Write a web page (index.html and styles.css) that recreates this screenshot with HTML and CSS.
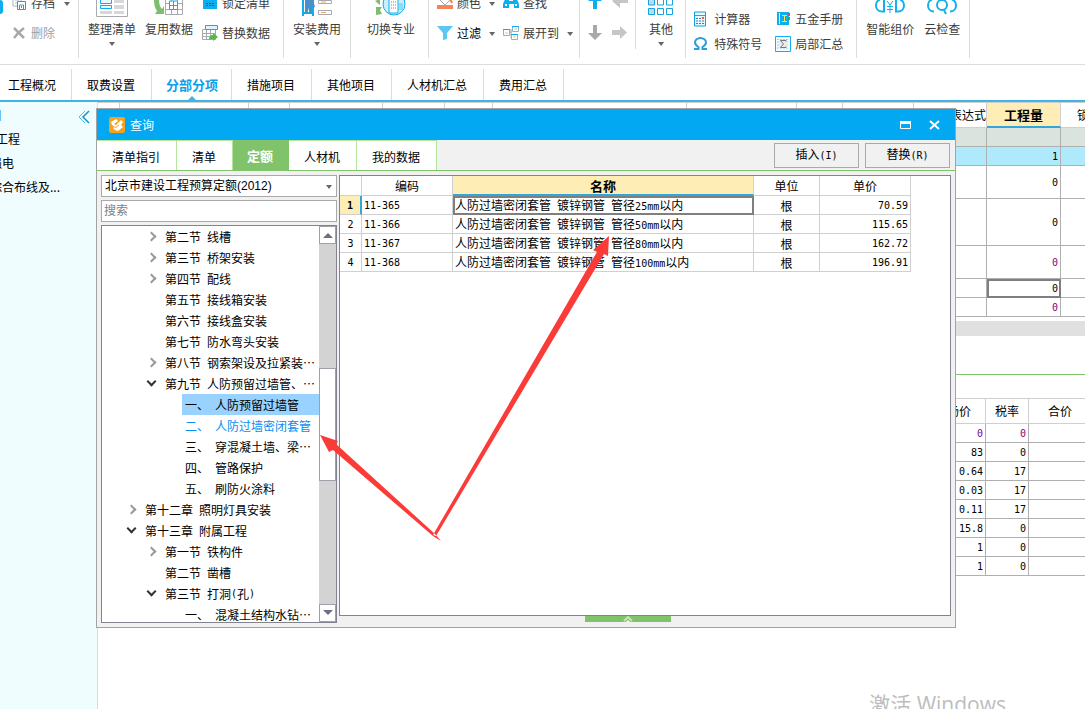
FILE: index.html
```html
<!DOCTYPE html>
<html lang="zh-CN">
<head>
<meta charset="utf-8">
<title>查询</title>
<link rel="stylesheet" href="styles.css">
</head>
<body>
<header class="ribbon">
  <div class="group g-file">
    <span class="dot"></span>
    <div class="stack">
      <button class="small"><svg width="14" height="16" viewBox="0 0 14 16"><path d="M1 2h8v9H1zM3 5h4M3 8h2" fill="#fff" stroke="#a9b4bb"/><path d="M5.500 6.500h8v8h-8zM7.500 14v-4h4v4M9.500 11v2" fill="#fff" stroke="#14a3e0"/></svg>存档</button>
      <button class="small off"><svg width="14" height="14" viewBox="0 0 14 14"><path d="M2 2l10 10M12 2C8 5 5 8 2 12" fill="none" stroke="#a8a8a8" stroke-width="2.500"/></svg>删除</button>
    </div>
    <div class="stack"><i class="caret row"></i><span class="row"></span></div>
  </div>
  <div class="group g-list">
    <button class="big"><svg width="32" height="32" viewBox="0 0 32 32"><path d="M.5 1h31v28.500H.5z" fill="#fff" stroke="#a9a9b0"/><path d="M4.500 12.500h11v4h-11zM4.500 18.500h11v3h-11z" fill="#e8f8fe" stroke="#0caeee"/><path d="M18 12h10v4H18zM18 18h10v4H18zM4 24h12v3H4zM18 24h10v3H18z" fill="#d8d6dc"/></svg>整理清单<i class="caret"></i></button>
    <button class="big"><svg width="32" height="32" viewBox="0 0 32 32"><path d="M12.500 8h17v19.500h-17zM12.500 16.500h17M12.500 22.500h17M18.500 8v19M24.500 8v19" fill="#fff" stroke="#a9a9b0"/><path d="M16.500 14h8v8.500h-8zM20.500 14v8M16.500 18.500h8" fill="#fff" stroke="#0caeee"/><path d="M1 13l5-1c0 5 1 8 3 10l2-3v8H2l2-3c-2-3-3-6-3-11z" fill="#7dbd6c"/></svg>复用数据<i class="caret hide"></i></button>
    <div class="stack">
      <button class="small"><svg width="16" height="16" viewBox="0 0 16 16"><path d="M1 0h14v14H1z" fill="#0caeee"/><path d="M4 8.500h8M4 10.500h8" stroke="#2a5f80" stroke-dasharray="2 1"/></svg>锁定清单</button>
      <button class="small"><svg width="16" height="16" viewBox="0 0 16 16"><path d="M.5 4.500h13v10H.5zM.5 8.500h13M.5 11.500h13M4.500 5v10M8.500 5v10" fill="#fff" stroke="#a9a9b0"/><path d="M3.500.5h12v4h-12z" fill="#dff5fe" stroke="#0caeee"/><path d="M7 15c0-3 1-5 4-5V8l5 4-5 4v-2c-2 0-3 0-4 1z" fill="#58b947"/></svg>替换数据</button>
    </div>
  </div>
  <div class="group g-fee">
    <button class="big"><svg width="32" height="32" viewBox="0 0 32 32"><path d="M2 8v21M12 8v21M2 26h10" stroke="#0caeee" stroke-width="2" fill="none"/><path d="M4 13h8l2 7-2 1-1-3v9H8v-6l-2 6H4z" fill="#4c8fc8"/><path d="M17.500 13.500h13v3h-13zM17.500 23.500h13v4h-13z" fill="#fff" stroke="#a9a9b0"/><path d="M20 15h5M20 25.500h5" stroke="#f2a85a"/></svg>安装费用<i class="caret"></i></button>
  </div>
  <div class="group g-spec">
    <button class="big"><svg width="32" height="32" viewBox="0 0 32 32"><circle cx="19" cy="17" r="11" fill="#c9effc" stroke="#0caeee"/><path d="M14 12h9v14h-9z" fill="#fff" stroke="#0caeee"/><path d="M16 15h6M16 18h6M16 21h6" stroke="#0caeee" stroke-dasharray="1 1"/><path d="M24 16h4v7h-4z" fill="#8adcf8"/><path d="M0 14l5-2v6zM1 20l6 0-2 3 2 4-6 1z" fill="#7dbd6c"/></svg>切换专业<i class="caret hide"></i></button>
  </div>
  <div class="group g-view">
    <div class="stack">
      <button class="small"><svg width="16" height="16" viewBox="0 0 16 16"><path d="M3 5l6-5 4 5-5 5z" fill="#fff" stroke="#a9a9b0"/><path d="M13 4l2 4" stroke="#f0854f" stroke-width="2"/><path d="M0 10h16v4H0z" fill="#f6845a"/></svg>颜色</button>
      <button class="small dark"><svg width="16" height="16" viewBox="0 0 16 16"><path d="M0 1h16l-6 7v6l-4 1V8z" fill="#5ac8f2"/></svg>过滤</button>
    </div>
    <div class="stack"><i class="caret row"></i><i class="caret row"></i></div>
    <div class="stack">
      <button class="small"><svg width="16" height="16" viewBox="0 0 16 16"><path d="M3 2h3v4h4V2h3l3 7v4h-5V9H6v4H0V9z" fill="#0caeee"/><path d="M2 9h2v2H2zM12 9h2v2h-2z" fill="#fff"/></svg>查找</button>
      <button class="small"><svg width="16" height="16" viewBox="0 0 16 16"><path d="M6 7h3M8 4v9" stroke="#a9a9b0"/><path d="M.5 4.500h6v6h-6zM9.500 1.500h6v5h-6zM8.500 9.500h6v5h-6z" fill="#fff" stroke="#8db4c6"/><path d="M0 4.500h7M9 1.500h7M8 9.500h7" stroke="#0caeee"/><path d="M2 8h3M11 4h3M10 12h3" stroke="#eec08b"/></svg>展开到</button>
    </div>
    <div class="stack"><i class="caret row"></i></div>
  </div>
  <div class="group short g-move">
    <div class="stack">
      <button class="row" aria-label="上移"><svg width="14" height="16" viewBox="0 0 14 16"><path d="M5 14V6H0l7-6 7 6H9v8z" fill="#0caeee"/></svg></button>
      <button class="row" aria-label="下移"><svg width="14" height="16" viewBox="0 0 14 16"><path d="M5 0h4v8h5l-7 7-7-7h5z" fill="#a9a9a9"/></svg></button>
    </div>
    <div class="stack">
      <button class="row" aria-label="左移"><svg width="16" height="16" viewBox="0 0 16 16"><path d="M16 4v4H8v5L0 6l8-7v5z" fill="#c6c6c6"/></svg></button>
      <button class="row" aria-label="右移"><svg width="16" height="16" viewBox="0 0 16 16"><path d="M0 5h8V1l7 6.500L8 14v-4H0z" fill="#c6c6c6"/></svg></button>
    </div>
  </div>
  <div class="group g-other">
    <button class="big"><svg width="26" height="32" viewBox="0 0 26 32"><path d="M.5 12h6v6h-6zM.5 21.500h6v6h-6z" fill="#b9dcf2" stroke="#14a3e0"/><path d="M9.500 12h6v6h-6zM9.500 21.500h6v6h-6zM18.500 12h6v6h-6zM18.500 21.500h6v6h-6z" fill="#fff" stroke="#14a3e0"/></svg>其他<i class="caret"></i></button>
  </div>
  <div class="group g-tools">
    <div class="stack tight">
      <button class="small"><svg width="13" height="16" viewBox="0 0 13 16"><path d="M.5 1h11v14H.5z" fill="#e9f8fe" stroke="#0c9fe0"/><path d="M1 4.500h11" stroke="#0caeee"/><path d="M2 7.500h8M2 10h8M2 12.500h8" stroke="#3a7fa8" stroke-dasharray="2 1"/><path d="M8 6h2v2H8z" fill="#f15a4a"/></svg>计算器</button>
      <button class="small"><svg width="13" height="14" viewBox="0 0 13 14"><path d="M0 12h4.500v-2C2 8.500 1 7 1 5.500 1 3 3.500 1 6.500 1S12 3 12 5.500C12 7 11 8.500 8.500 10v2H13" fill="none" stroke="#2e9bd6" stroke-width="2"/></svg>特殊符号</button>
    </div>
    <div class="stack tight wide">
      <button class="small"><svg width="16" height="16" viewBox="0 0 16 16"><path d="M2 1h12v13H2z" fill="#0caeee"/><path d="M4.500 2v11" stroke="#fff"/><path d="M7 4.500h5M9.500 5v5M7 10.500h5" stroke="#ffe74a"/><path d="M13 2h2v3h-2z" fill="#e44"/><path d="M13 6h2v3h-2z" fill="#4a4"/></svg>五金手册</button>
      <button class="small"><svg width="16" height="16" viewBox="0 0 16 16"><path d="M.5.5h15v15H.5z" fill="#f4fcff" stroke="#14aef0"/><path d="M2 3.500h12M2 6h12M2 9h12M2 12h12" stroke="#8ad4f2" stroke-dasharray="2 1"/><path d="M4 4h8v8H4z" fill="#ececec"/><path d="M11 5.500V4.500H5.500L8.500 8l-3 3.500H11v-1" fill="none" stroke="#777"/></svg>局部汇总</button>
    </div>
  </div>
  <div class="group g-smart">
    <button class="big"><svg width="32" height="32" viewBox="0 0 32 32"><path d="M10 10v14.500H8c-4 0-6-3-6-6s1-5 4-6M22 10v14.500h2c4 0 6-3 6-6s-1-5-4-6" fill="none" stroke="#14b0ee" stroke-width="2"/><path d="M13 14l3 4 3-4M13 19.500h6M13 22.500h6M16 18v8" stroke="#14b0ee" fill="none"/></svg>智能组价<i class="caret hide"></i></button>
    <button class="big"><svg width="32" height="32" viewBox="0 0 32 32"><path d="M8 24.500c-4 0-6-3-6-6s1-5 4-6M24 24.500c4 0 6-3 6-6s-1-5-4-6" fill="none" stroke="#14b0ee" stroke-width="2"/><circle cx="16" cy="18" r="5" fill="none" stroke="#14b0ee" stroke-width="2"/><path d="M18 23l2 4" stroke="#14b0ee" stroke-width="2"/></svg>云检查<i class="caret hide"></i></button>
  </div>
</header>

<nav class="tabs">
  <a href="#">工程概况</a><a href="#">取费设置</a><a href="#" class="on">分部分项</a><a href="#">措施项目</a><a href="#">其他项目</a><a href="#">人材机汇总</a><a href="#">费用汇总</a>
</nav>

<main class="work">
  <aside class="side">
    <button class="fold" aria-label="收起"><svg width="12" height="14" viewBox="0 0 12 14"><path d="M7 1L1 7l6 6" fill="none" stroke="#49bfe8"/><path d="M11 1L5 7l6 6" fill="none" stroke="#1a94c4" stroke-width="1.500"/></svg></button>
    <ul>
      <li class="mark"></li>
      <li>工程</li>
      <li class="out">强电</li>
      <li class="out">综合布线及...</li>
    </ul>
  </aside>
  <section class="content">
    <table class="grid top">
      <colgroup><col class="w22"><col class="w129"><col class="w41"><col class="w93"><col class="w62"><col class="w48"><col class="w194"><col class="w110"><col class="w46"><col class="w71"><col class="w73"><col class="w74"><col></colgroup>
      <thead><tr><th></th><th></th><th></th><th></th><th></th><th></th><th></th><th></th><th></th><th></th><th>工程量表达式</th><th class="hot">工程量</th><th class="cut">锁定</th></tr></thead>
      <tbody>
        <tr class="sum"><td colspan="10"></td><td></td><td></td><td></td></tr>
        <tr class="pick"><td colspan="10"></td><td></td><td>1</td><td></td></tr>
        <tr class="mid"><td colspan="10"></td><td></td><td>0</td><td></td></tr>
        <tr class="tall"><td colspan="10"></td><td></td><td>0</td><td></td></tr>
        <tr class="mid"><td colspan="10"></td><td></td><td class="calc">0</td><td></td></tr>
        <tr><td colspan="10"></td><td></td><td class="cursor">0</td><td></td></tr>
        <tr><td colspan="10"></td><td></td><td class="calc">0</td><td></td></tr>
      </tbody>
    </table>
    <div class="hbar"></div>
    <div class="split"></div>
    <table class="grid bottom">
      <colgroup><col><col class="w43"><col class="w56"></colgroup>
      <thead><tr><th class="end">市场价</th><th>税率</th><th class="cut">合价</th></tr></thead>
      <tbody>
        <tr><td class="calc">0</td><td class="calc">0</td><td></td></tr>
        <tr><td>83</td><td>0</td><td></td></tr>
        <tr><td>0.64</td><td>17</td><td></td></tr>
        <tr><td>0.03</td><td>17</td><td></td></tr>
        <tr><td>0.11</td><td>17</td><td></td></tr>
        <tr><td>15.8</td><td>0</td><td></td></tr>
        <tr><td>1</td><td>0</td><td></td></tr>
        <tr><td>1</td><td>0</td><td></td></tr>
      </tbody>
    </table>
  </section>
</main>

<div class="watermark">激活 Windows</div>

<div class="dialog" role="dialog" aria-labelledby="dlg-title">
  <div class="title">
    <svg width="16" height="16" viewBox="0 0 16 16"><rect width="16" height="16" rx="2" fill="#f9a11f"/><path d="M2 5l5-3 2 2-4 3 2 1 5-5 2 2-2 3 2 2-5 4-3-1-2-2 2-1-3-2z" fill="#fff"/><path d="M6 11l4-3" stroke="#f9a11f" fill="none"/></svg>
    <h1 id="dlg-title">查询</h1>
    <button aria-label="最大化"><svg width="12" height="12" viewBox="0 0 12 12"><path d="M1.500 2.500h10v7h-10z" fill="none" stroke="#fff"/><path d="M1 3.500h11" stroke="#fff" stroke-width="3"/></svg></button>
    <button aria-label="关闭"><svg width="12" height="12" viewBox="0 0 12 12"><path d="M1 2l9 8M10 2l-9 8" stroke="#fff" stroke-width="2"/></svg></button>
  </div>
  <div class="bar">
    <div class="dtabs">
      <button>清单指引</button><button>清单</button><button class="on">定额</button><button>人材机</button><button>我的数据</button>
    </div>
    <button class="act">插入<span class="n">(I)</span></button>
    <button class="act">替换<span class="n">(R)</span></button>
  </div>
  <div class="body">
    <div class="left">
      <div class="combo">
        <select aria-label="定额库"><option>北京市建设工程预算定额(2012)</option></select>
        <i class="caret"></i>
      </div>
      <input type="text" placeholder="搜索" aria-label="搜索">
      <div class="tree">
        <ul>
          <li class="l2 shut">第二节<span class="n"> </span>线槽</li>
          <li class="l2 shut">第三节<span class="n"> </span>桥架安装</li>
          <li class="l2 shut">第四节<span class="n"> </span>配线</li>
          <li class="l2">第五节<span class="n"> </span>接线箱安装</li>
          <li class="l2">第六节<span class="n"> </span>接线盒安装</li>
          <li class="l2">第七节<span class="n"> </span>防水弯头安装</li>
          <li class="l2 shut">第八节<span class="n"> </span>钢索架设及拉紧装⋯</li>
          <li class="l2 open">第九节<span class="n"> </span>人防预留过墙管、⋯</li>
          <li class="l3 sel">一、<span class="n"> </span>人防预留过墙管</li>
          <li class="l3 hov">二、<span class="n"> </span>人防过墙密闭套管</li>
          <li class="l3">三、<span class="n"> </span>穿混凝土墙、梁⋯</li>
          <li class="l3">四、<span class="n"> </span>管路保护</li>
          <li class="l3">五、<span class="n"> </span>刷防火涂料</li>
          <li class="l1 shut">第十二章<span class="n"> </span>照明灯具安装</li>
          <li class="l1 open">第十三章<span class="n"> </span>附属工程</li>
          <li class="l2 shut">第一节<span class="n"> </span>铁构件</li>
          <li class="l2">第二节<span class="n"> </span>凿槽</li>
          <li class="l2 open">第三节<span class="n"> </span>打洞<span class="n">(</span>孔<span class="n">)</span></li>
          <li class="l3">一、<span class="n"> </span>混凝土结构水钻⋯</li>
        </ul>
        <div class="vbar">
          <button aria-label="向上"><svg width="10" height="6" viewBox="0 0 10 6"><path d="M0 6l5-5 5 5z" fill="#6c7080"/></svg></button>
          <div class="thumb"></div>
          <button aria-label="向下"><svg width="10" height="6" viewBox="0 0 10 6"><path d="M0 0l5 5 5-5z" fill="#6c7080"/></svg></button>
        </div>
      </div>
    </div>
    <div class="right">
      <div class="panel">
        <table class="result">
          <colgroup><col class="w22"><col class="w91"><col class="w301"><col class="w66"><col class="w91"></colgroup>
          <thead><tr><th></th><th>编码</th><th class="hot">名称</th><th>单位</th><th>单价</th></tr></thead>
          <tbody>
            <tr><th class="cur">1</th><td class="n">11-365</td><td class="cursor">人防过墙密闭套管<span class="n"> </span>镀锌钢管<span class="n"> </span>管径<span class="n">25mm</span>以内</td><td class="mid">根</td><td class="n num">70.59</td></tr>
            <tr><th>2</th><td class="n">11-366</td><td>人防过墙密闭套管<span class="n"> </span>镀锌钢管<span class="n"> </span>管径<span class="n">50mm</span>以内</td><td class="mid">根</td><td class="n num">115.65</td></tr>
            <tr><th>3</th><td class="n">11-367</td><td>人防过墙密闭套管<span class="n"> </span>镀锌钢管<span class="n"> </span>管径<span class="n">80mm</span>以内</td><td class="mid">根</td><td class="n num">162.72</td></tr>
            <tr><th>4</th><td class="n">11-368</td><td>人防过墙密闭套管<span class="n"> </span>镀锌钢管<span class="n"> </span>管径<span class="n">100mm</span>以内</td><td class="mid">根</td><td class="n num">196.91</td></tr>
          </tbody>
        </table>
      </div>
      <button class="pull" aria-label="展开"><svg width="10" height="6" viewBox="0 0 10 6"><path d="M1 5l4-4 4 4" fill="none" stroke="#c4e6b8" stroke-width="2"/><path d="M3 6l2-2 2 2z" fill="#fff"/></svg></button>
    </div>
  </div>
</div>

<svg class="arrows" width="300" height="310" viewBox="315 235 300 310"><path d="M609 236L593 250l4 2L433 535l3 1L604 254l4 2zM320 435l18 6-2 3 99 90 6 7-8-5-100-86-4 2z" fill="#fb3b38"/></svg>
</body>
</html>
```
FILE: styles.css
```css
* { box-sizing: border-box; }

body {
  position: relative;
  display: flex;
  flex-direction: column;
  min-height: 100vh;
  margin: 0;
  overflow: hidden;
  background: #fff;
  color: #000;
  font: 12px/18px "Noto Sans CJK SC", sans-serif;
}

button {
  margin: 0;
  padding: 0;
  border: 0;
  background: none;
  color: inherit;
  font: inherit;
}

svg { display: block; flex: none; }
ul { margin: 0; padding: 0; list-style: none; }

.n {
  font-family: "DejaVu Sans Mono", monospace;
  font-size: 10px;
  white-space: pre;
}

.caret {
  width: 6px;
  height: 8px;
  background: #666;
  clip-path: polygon(0 3px, 100% 3px, 50% 7px);
}
.caret.hide { visibility: hidden; }

/* ribbon */
.ribbon {
  display: flex;
  align-items: flex-end;
  height: 65px;
  padding-bottom: 6px;
  overflow: hidden;
  border-bottom: 1px solid #dcdcdc;
  color: #3c3c3c;
}
.group {
  display: flex;
  align-items: flex-end;
  flex: none;
  height: 59px;
  padding-bottom: 10px;
  border-right: 1px solid #dcdcdc;
}
.group.short { height: 50px; padding-bottom: 1px; margin-bottom: 9px; }
.stack { display: flex; flex-direction: column; justify-content: flex-end; }
.big { display: flex; flex-direction: column; align-items: center; padding-bottom: 1px; line-height: 20px; white-space: nowrap; }
.small { display: flex; align-items: center; gap: 4px; height: 30px; white-space: nowrap; }
.row { display: flex; align-items: center; height: 30px; }
.caret.row { height: 8px; margin: 11px 0; }
.off { color: #a0a0a0; }
.dark { color: #000; }
.tight .small { height: 25px; gap: 7px; }
.tight.wide .small { gap: 4px; }

.g-file { gap: 9px; padding-right: 8px; }
.g-file .small { gap: 5px; }
.dot { width: 3px; height: 14px; margin-bottom: 34px; background: #0caeee; border-radius: 0 8px 8px 0; }
.g-list { padding-left: 9px; gap: 9px; padding-right: 13px; }
.g-fee { padding-left: 9px; padding-right: 9px; }
.g-spec { padding-left: 16px; padding-right: 13px; }
.g-view { padding-left: 8px; gap: 8px; padding-right: 6px; }
.g-move { padding-left: 8px; gap: 10px; padding-right: 7px; }
.g-other { padding-left: 12px; padding-right: 11px; }
.g-tools { padding-left: 8px; padding-right: 13px; padding-bottom: 2px; gap: 13px; }
.g-smart { padding-left: 9px; padding-right: 9px; gap: 10px; }

/* page tabs */
.tabs {
  display: flex;
  align-items: stretch;
  height: 37px;
  padding-top: 4px;
  border-bottom: 2px solid #41b4e4;
}
.tabs a {
  position: relative;
  padding: 0 16px 0 15px;
  border-right: 1px solid #dcdcdc;
  color: #000;
  line-height: 32px;
  text-decoration: none;
  white-space: nowrap;
}
.tabs a:first-child { padding-left: 8px; padding-right: 15px; }
.tabs a.on { padding: 0 13px 0 14px; color: #0c9fe8; font-size: 13px; font-weight: bold; }
.tabs a.on::after {
  content: "";
  position: absolute;
  bottom: 0;
  left: 50%;
  margin-left: -4px;
  border: 4px solid transparent;
  border-top: 0;
  border-bottom-color: #41b4e4;
}

/* work area */
.work { display: flex; flex: 1; }
.side {
  position: relative;
  width: 98px;
  flex: none;
  overflow: hidden;
  border-right: 1px solid #d4dcde;
  background: #effdff;
}
.side li { height: 24px; margin-left: -4px; line-height: 24px; white-space: nowrap; }
.side li.out { margin-left: -10px; }
.side li.mark { width: 5px; height: 11px; margin-top: 8px; margin-bottom: 6px; background: #67c5f5; }
.fold { position: absolute; top: 8px; right: 7px; }
.content { flex: 1; min-width: 0; border-top: 1px solid #d0d0d0; }

table { border-spacing: 0; table-layout: fixed; }
th, td { padding: 0; white-space: nowrap; overflow: hidden; line-height: 16px; }
th { font-weight: normal; }

.w22 { width: 22px; } .w129 { width: 129px; } .w41 { width: 41px; }
.w93 { width: 93px; } .w62 { width: 62px; } .w48 { width: 48px; }
.w194 { width: 194px; } .w110 { width: 110px; } .w46 { width: 46px; }
.w71 { width: 71px; } .w73 { width: 73px; } .w74 { width: 74px; }
.w43 { width: 43px; } .w56 { width: 56px; } .w91 { width: 91px; }
.w301 { width: 301px; } .w66 { width: 66px; }

.grid { width: 100%; }
.grid th { height: 25px; border-right: 1px solid #d0d0d0; border-bottom: 1px solid #d0d0d0; }
.grid td {
  height: 19px;
  padding: 2px 2px 0 0;
  border-right: 1px solid #b0b0b0;
  border-bottom: 1px solid #b0b0b0;
  font-family: "DejaVu Sans Mono", monospace;
  font-size: 10px;
  text-align: right;
}
.grid th:last-child, .grid td:last-child { border-right: 0; }
.grid .cut { padding-left: 16px; text-align: left; }
.grid.bottom .cut { padding-left: 19px; }
.grid .end { padding-right: 14px; text-align: right; }
.grid tr.mid td { height: 33px; }
.grid tr.tall td { height: 47px; }
.grid .sum td { background: #dae3de; }
.grid .pick td { background: #aee9fc; }
.grid .calc { color: #800080; }
.grid.bottom { border-top: 1px solid #d0d0d0; }
th.hot { background: #feedb5; border-bottom: 2px solid #33a5d8 !important; font-size: 13px; font-weight: bold; }
.cursor { outline: 2px solid #7f7f7f; outline-offset: -2px; }
.hbar { height: 15px; margin-top: 4px; background: #e0e0e0; }
.split { height: 39px; margin-bottom: 23px; border-bottom: 1px solid #81c36a; }

.watermark {
  position: absolute;
  right: 79px;
  bottom: -9px;
  color: #bdbdbd;
  font: 21px/28px "Open Sans", "Noto Sans CJK SC", sans-serif;
}

/* query window */
.dialog {
  position: absolute;
  top: 108px;
  right: 129px;
  left: 96px;
  display: flex;
  flex-direction: column;
  height: 520px;
  border: 1px solid #a3a3a3;
  background: #f1f1f1;
}
.title {
  display: flex;
  align-items: center;
  gap: 18px;
  height: 31px;
  padding: 0 14px 0 12px;
  background: #02a8f2;
  color: #fff;
}
.title h1 { flex: 1; margin: 0 0 0 -13px; font-size: 12px; font-weight: normal; }
.bar {
  display: flex;
  align-items: center;
  gap: 6px;
  height: 31px;
  padding-right: 5px;
  border-bottom: 1px solid #81c36a;
}
.dtabs { display: flex; flex: 1; align-self: stretch; }
.dtabs button {
  padding: 2px 16px 0 15px;
  border-top: 1px solid #b5e59d;
  border-right: 1px solid #b5e59d;
  background: #fff;
}
.dtabs .on { padding: 1px 15px 0 14px; border-color: #81c36a; background: #81c36a; color: #fff; font-size: 13px; font-weight: bold; }
.act { width: 85px; height: 25px; border: 1px solid #a9a9a9; }
.body { display: flex; flex: 1; gap: 2px; min-height: 0; padding: 4px; }
.left { display: flex; flex-direction: column; gap: 3px; width: 236px; }
.combo { position: relative; }
.combo .caret { position: absolute; top: 7px; right: 5px; }
select, input {
  display: block;
  width: 100%;
  height: 22px;
  margin: 0;
  padding: 0 3px;
  appearance: none;
  border: 1px solid #a9a9a9;
  border-radius: 0;
  outline: 0;
  background: #fff;
  color: #000;
  font: 12px/20px "Liberation Sans", "Noto Sans CJK SC", sans-serif;
}
input { padding: 0 2px; }
input::placeholder { color: #808080; }
.tree { display: flex; flex: 1; min-height: 0; overflow: hidden; border: 1px solid #83838f; background: #fff; }
.tree ul { flex: 1; min-width: 0; }
.tree li { display: flex; align-items: center; height: 21px; line-height: 21px; white-space: nowrap; }
.tree li::before {
  content: "";
  box-sizing: border-box;
  width: 7px;
  height: 7px;
  margin: 0 10px 0 2px;
  border: 0 solid #999;
  flex: none;
}
.tree .shut::before { border-width: 2px 2px 0 0; transform: rotate(45deg); }
.tree .open::before { border-width: 0 2px 2px 0; border-color: #333; transform: translateY(-2px) rotate(45deg); }
.l1 { padding-left: 24px; }
.l2 { padding-left: 44px; }
.tree .l3 { margin-left: 80px; padding-left: 3px; }
.tree .l3::before { display: none; }
.sel { background: #99d1ff; }
.hov { color: #0a8cf0; }
.vbar { display: flex; flex-direction: column; justify-content: space-between; width: 17px; background: #d3d3d3; }
.vbar button, .thumb { display: grid; place-items: center; height: 18px; border: 1px solid #a0a0a8; background: #fff; }
.vbar .thumb { height: 113px; }
.right { display: flex; flex: 1; flex-direction: column; min-width: 0; padding-bottom: 1px; }
.panel { flex: 1; border: 1px solid #83838f; background: #fff; }
.pull { display: grid; place-items: center; align-self: center; width: 86px; height: 6px; margin-right: 34px; background: #81c36a; }

.result { width: 571px; }
.result th, .result td { height: 19px; border-right: 1px solid #d0d0d0; border-bottom: 1px solid #d0d0d0; }
.result thead th { height: 20px; padding-top: 1px; }
.result tbody th, .result td { padding: 2px 0 0 2px; line-height: 14px; }
.result tbody th { padding-left: 0; font-family: "DejaVu Sans Mono", monospace; font-size: 10px; }
.result .cur { border-right: 2px solid #33a5d8; background: #feedb5; font-weight: bold; }
.result .mid { padding-left: 0; text-align: center; }
.result .num { padding-right: 2px; text-align: right; }

.arrows { position: absolute; top: 235px; left: 315px; pointer-events: none; }
```
